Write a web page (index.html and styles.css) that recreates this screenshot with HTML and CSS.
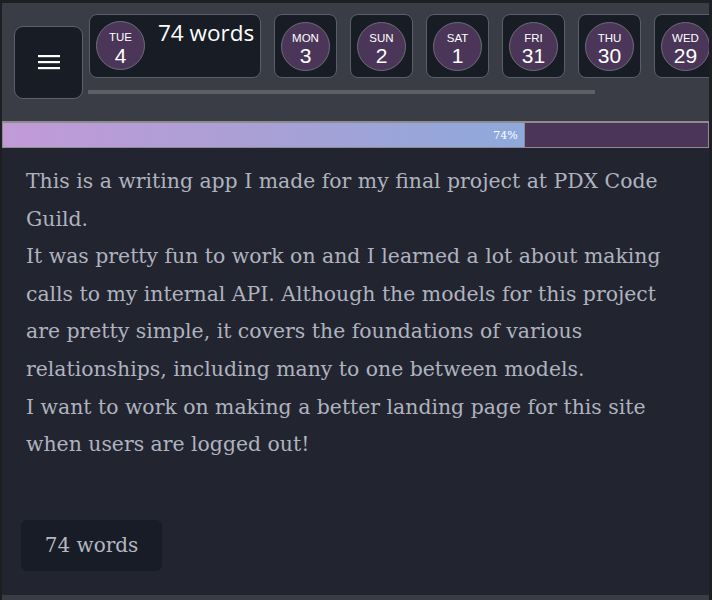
FILE: index.html
```html
<!DOCTYPE html>
<html>
<head>
<meta charset="utf-8">
<link rel="stylesheet" href="styles.css">
</head>
<body>
<div class="frame">
  <header class="topbar">
    <button class="menu-btn" aria-label="menu">
      <svg width="22" height="16" viewBox="0 0 22 16"><rect x="0" y="1" width="22" height="2.2" fill="#fff"/><rect x="0" y="7" width="22" height="2.2" fill="#fff"/><rect x="0" y="13" width="22" height="2.2" fill="#fff"/></svg>
    </button>
    <div class="days-scroll">
      <div class="days">
        <div class="day day-current">
          <div class="circle"><span class="dname">TUE</span><span class="dnum">4</span></div>
          <span class="count">74 words</span>
        </div>
        <div class="day"><div class="circle"><span class="dname">MON</span><span class="dnum">3</span></div></div>
        <div class="day"><div class="circle"><span class="dname">SUN</span><span class="dnum">2</span></div></div>
        <div class="day"><div class="circle"><span class="dname">SAT</span><span class="dnum">1</span></div></div>
        <div class="day"><div class="circle"><span class="dname">FRI</span><span class="dnum">31</span></div></div>
        <div class="day"><div class="circle"><span class="dname">THU</span><span class="dnum">30</span></div></div>
        <div class="day"><div class="circle"><span class="dname">WED</span><span class="dnum">29</span></div></div>
      </div>
      <div class="scroll-thumb"></div>
    </div>
  </header>
  <div class="progress">
    <div class="progress-fill" style="width:74%"><span>74%</span></div>
  </div>
  <main class="editor">
    <div class="entry">This is a writing app I made for my final project at PDX Code Guild.<br>It was pretty fun to work on and I learned a lot about making calls to my internal API. Although the models for this project are pretty simple, it covers the foundations of various relationships, including many to one between models.<br>I want to work on making a better landing page for this site when users are logged out!</div>
    <div class="wordcount">74 words</div>
  </main>
  <div class="bottom-strip"></div>
</div>
</body>
</html>
```
FILE: styles.css
```css
* { box-sizing: border-box; }
html, body { margin: 0; padding: 0; }
body {
  background: #1e1f22;
  width: 712px;
  height: 600px;
  overflow: hidden;
}
.frame {
  padding: 3px 3px 0 2px;
  display: flex;
  flex-direction: column;
  height: 600px;
}
.topbar {
  background: #3a3d45;
  height: 118px;
  display: flex;
  align-items: flex-start;
  overflow: hidden;
}
.menu-btn {
  margin: 23px 0 0 12px;
  width: 69px;
  height: 73px;
  flex: none;
  background: #171c25;
  border: 1.5px solid #5e616a;
  border-radius: 9px;
  display: flex;
  align-items: center;
  justify-content: center;
  padding: 0;
}
.menu-btn svg { display: block; margin-top: -2px; }
.days-scroll {
  margin-left: 5px;
  padding-top: 11px;
  flex: 1;
  overflow: hidden;
}
.days {
  display: flex;
  gap: 13px;
  padding-left: 1px;
}
.day {
  flex: none;
  width: 63px;
  height: 64px;
  background: #171c25;
  border: 1.5px solid #5b5f68;
  border-radius: 8px;
  display: flex;
  align-items: center;
  padding: 0 6px;
}
.day-current {
  width: 172px;
  align-items: flex-start;
}
.circle {
  flex: none;
  width: 49px;
  height: 49px;
  border-radius: 50%;
  background: #4b3659;
  border: 1.5px solid #6c6e76;
  display: flex;
  flex-direction: column;
  align-items: center;
  justify-content: flex-start;
  padding-top: 9px;
  color: #fff;
  font-family: "Liberation Sans", Arial, sans-serif;
}
.day-current .circle { margin-top: 6px; }
.dname {
  font-size: 11.5px;
  line-height: normal;
}
.dnum {
  font-size: 21px;
  line-height: normal;
  margin-top: 0.5px;
}
.count {
  margin: 3px 0 0 13px;
  color: #fff;
  font-family: "Open Sans", "Noto Sans", sans-serif;
  font-size: 22.5px;
  line-height: 30px;
  white-space: nowrap;
}
.scroll-thumb {
  margin-top: 12px;
  width: 507px;
  height: 4px;
  background: #5c5f65;
}
.progress {
  height: 27px;
  background: #4b3559;
  border: 1px solid #8d8d90;
  border-top-width: 2px;
  flex: none;
  display: flex;
}
.progress-fill {
  height: 100%;
  background: linear-gradient(90deg, #c29ad8 0%, #a9a0d6 50%, #8ea9dc 100%);
  border-right: 1px solid #8d8d90;
  display: flex;
  align-items: center;
  justify-content: flex-end;
  padding-right: 6px;
}
.progress-fill span {
  color: #fff;
  font-family: "DejaVu Serif", serif;
  font-size: 11px;
}
.editor {
  flex: 1;
  background: #222530;
  padding: 15px 10px 24px 24px;
  display: flex;
  flex-direction: column;
  align-items: flex-start;
}
.entry {
  font-family: "DejaVu Serif", serif;
  font-size: 20.4px;
  line-height: 37.6px;
  color: #afb3bf;
  width: 668px;
}
.wordcount {
  margin: 56px 0 0 -5px;
  width: 141px;
  height: 51px;
  background: #181c26;
  border-radius: 6px;
  display: flex;
  align-items: center;
  justify-content: center;
  font-family: "DejaVu Serif", serif;
  font-size: 20px;
  color: #b4b7c2;
}
.bottom-strip {
  height: 5px;
  background: #3a3d45;
  flex: none;
}
```
